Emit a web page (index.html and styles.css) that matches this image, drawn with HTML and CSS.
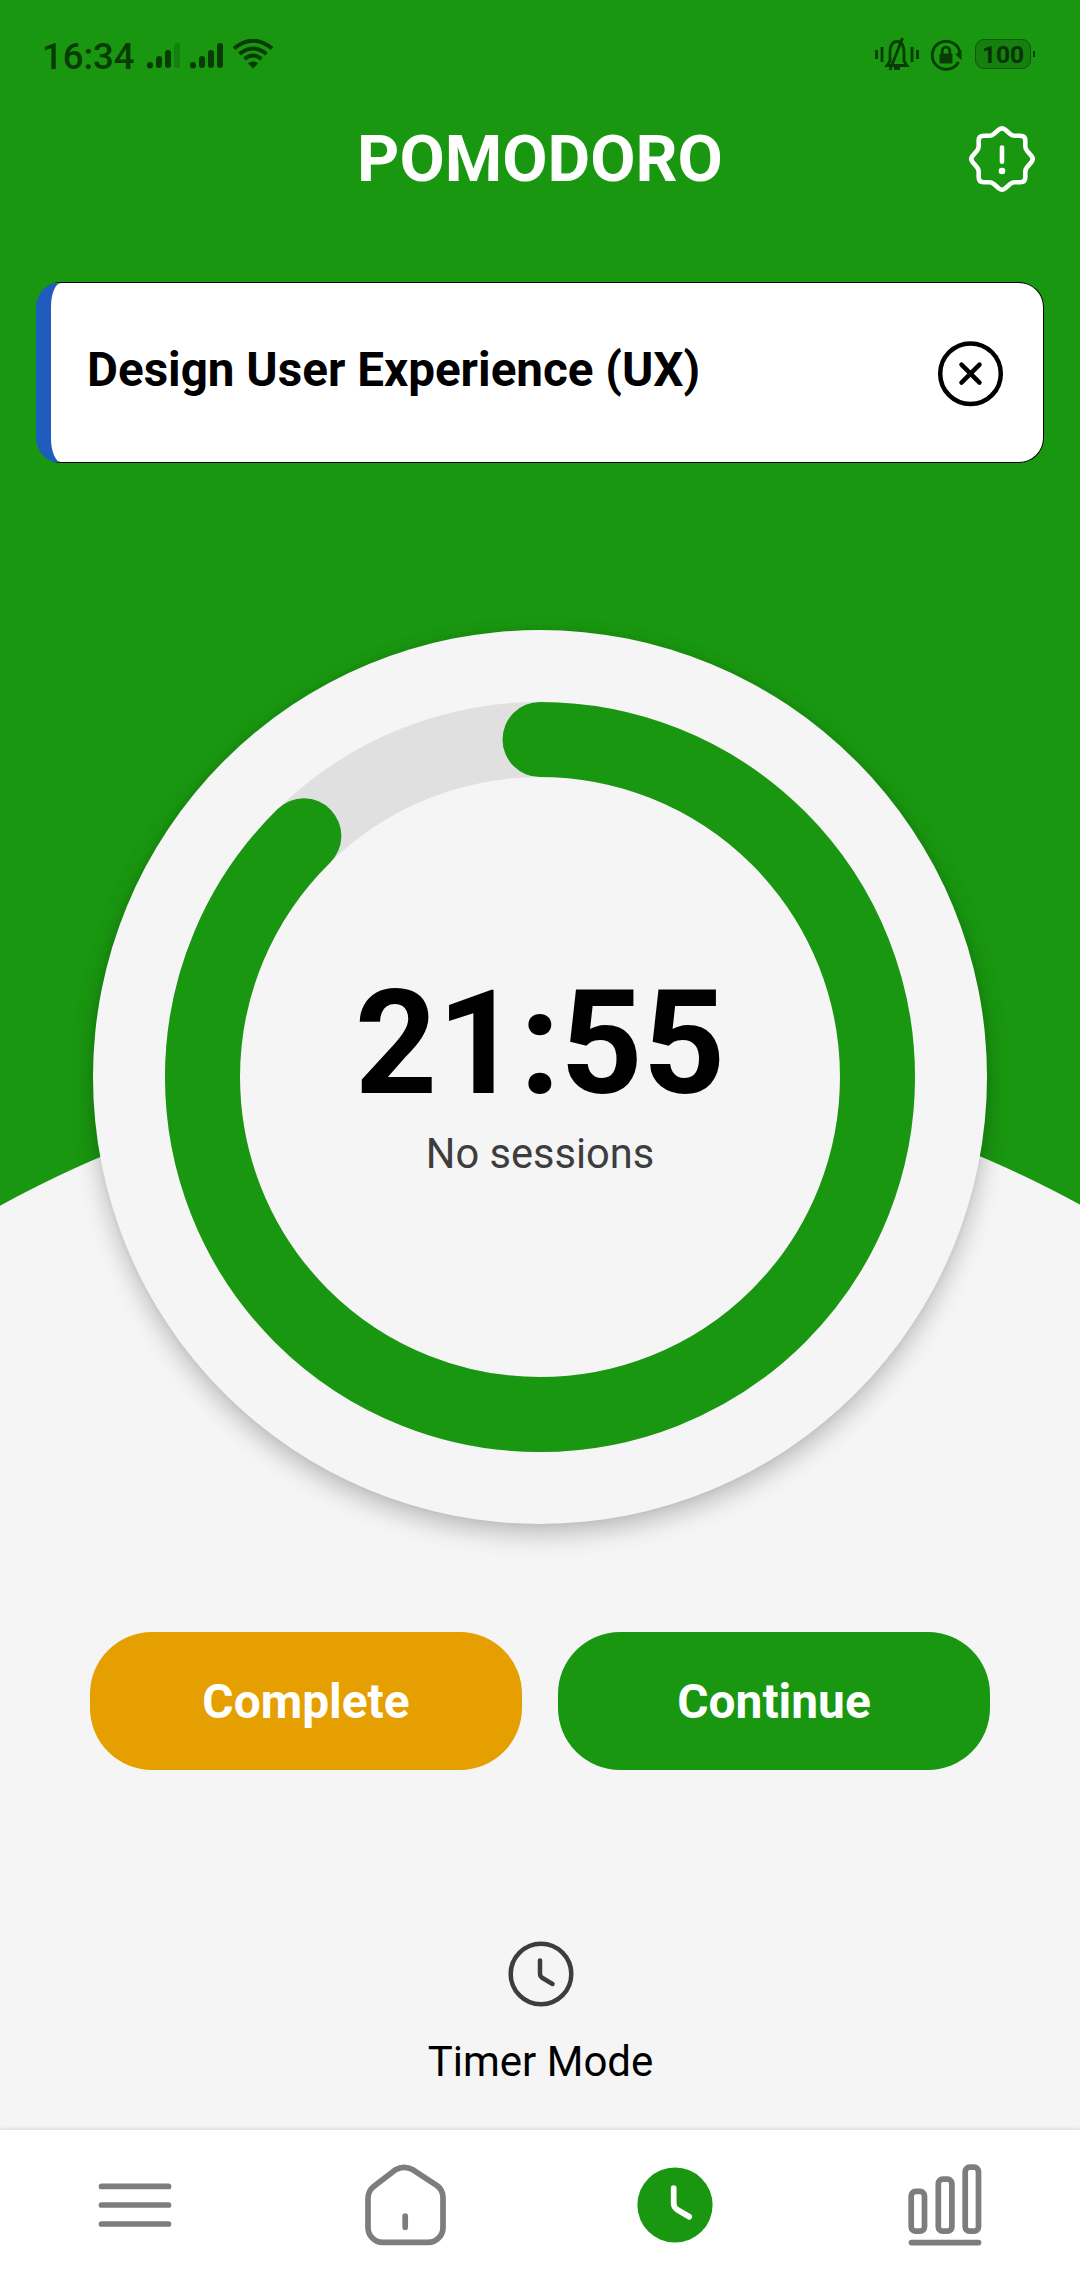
FILE: index.html
```html
<!DOCTYPE html>
<html lang="en">
<head>
<meta charset="utf-8">
<title>Pomodoro</title>
<link rel="stylesheet" href="styles.css">
</head>
<body>
<div class="app">
  <div class="status">
    <span class="status-time">16:34</span>
    <svg class="signal" width="30" height="30" viewBox="0 0 30 30">
      <path d="M3 24.5V24M12 24V18M21 24V12"/><path class="faint" d="M30 24V5"/>
    </svg>
    <svg class="signal signal-second" width="34" height="30" viewBox="0 0 34 30">
      <path d="M3 24.5V24M12 24V18M21 24V12M30 24V5"/>
    </svg>
    <svg class="wifi" width="42" height="30" viewBox="0 0 42 30">
      <path d="M2 9.5Q21-6 40 9.5M7.5 15Q21 4 34.5 15M12.5 20Q21 13 29.5 20"/>
      <path class="solid" d="M16 24.3Q21 20.8 26 24.3L21 29.5Z"/>
    </svg>
    <div class="status-right">
      <svg class="bell" width="46" height="36" viewBox="0 0 46 36">
        <path d="M2.500 13V22M8 10V25M38 10V25M43.500 13V22"/>
        <path d="M13 28.500L16 24V15C16 8 19 4.500 23 4.500S30 8 30 15V24L33 28.500ZM28.500 1L16 33M20 31.500H26"/>
      </svg>
      <svg class="lock" width="34" height="34" viewBox="0 0 34 34">
        <path d="M29.500 24A14 14 0 1 1 31 15"/>
        <path class="solid" d="M26.500 16.500L32.500 12V22Z"/>
        <rect class="solid" x="10.500" y="15.500" width="13" height="10" rx="1.500"/>
        <path d="M13.200 16V13A3.800 3.800 0 0 1 20.800 13V16"/>
      </svg>
      <span class="battery">100</span>
    </div>
  </div>

  <header class="header">
    <h1 class="title">POMODORO</h1>
    <svg class="notice" width="72" height="72" viewBox="-36 -36 72 72">
      <path d="M-3-29.500Q0-31.800 3-29.500L8.200-25Q10.300-23.300 13-23.300H18.300Q23.300-23.300 23.300-18.300V-13Q23.300-10.300 25-8.200L29.500-3Q31.800 0 29.500 3L25 8.200Q23.300 10.300 23.300 13V18.300Q23.300 23.300 18.300 23.300H13Q10.300 23.300 8.200 25L3 29.500Q0 31.800-3 29.500L-8.200 25Q-10.300 23.300-13 23.300H-18.300Q-23.300 23.300-23.300 18.300V13Q-23.300 10.300-25 8.200L-29.500 3Q-31.800 0-29.500-3L-25-8.200Q-23.300-10.300-23.300-13V-18.300Q-23.300-23.300-18.300-23.300H-13Q-10.300-23.300-8.200-25ZM0-11.400V2.700"/>
      <circle cx="0" cy="12" r="3.300"/>
    </svg>
  </header>

  <section class="task">
    <span class="task-name">Design User Experience (UX)</span>
    <svg class="task-close" width="72" height="72" viewBox="0 0 72 72">
      <circle cx="36.500" cy="36.700" r="30.300"/>
      <path d="M27.500 27.700L45.500 45.700M45.500 27.700L27.500 45.700"/>
    </svg>
  </section>

  <main class="dial">
    <svg class="ring" width="750" height="750" viewBox="0 0 750 750">
      <circle class="ring-track" cx="375" cy="375" r="337.500"/>
      <circle class="ring-value" cx="375" cy="375" r="337.500" pathLength="1500" stroke-dasharray="1315 1500" transform="rotate(-90 375 375)"/>
    </svg>
    <div class="readout">
      <div class="clock">21:55</div>
      <div class="sessions">No sessions</div>
    </div>
  </main>

  <div class="actions">
    <button class="action complete">Complete</button>
    <button class="action continue">Continue</button>
  </div>

  <div class="mode">
    <svg class="mode-icon" width="72" height="72" viewBox="0 0 72 72">
      <circle cx="36" cy="36" r="30.300"/>
      <path d="M35 22.500V35.500Q35 38.600 37.500 40L47.500 46"/>
    </svg>
    <span class="mode-label">Timer Mode</span>
  </div>

  <nav class="nav">
    <svg class="nav-icon" width="90" height="90" viewBox="0 0 90 90">
      <path d="M11.500 26.400H78.500M11.500 45H78.500M11.500 64H78.500"/>
    </svg>
    <svg class="nav-icon" width="90" height="90" viewBox="0 0 90 90">
      <path d="M22.800 82.400H68A15 15 0 0 0 83 67.400V37.500Q83 30 77 25.600L53 9.800Q44 4.800 35.500 9.800L14 26.300Q8 31 8 38.500V67.400A15 15 0 0 0 22.800 82.400ZM45.200 56V67.200"/>
    </svg>
    <svg class="nav-icon active" width="90" height="90" viewBox="0 0 90 90">
      <circle cx="45" cy="45" r="37.600"/>
      <path d="M43.700 28V43Q43.700 47.500 47.300 49.700L59.200 56.800"/>
    </svg>
    <svg class="nav-icon" width="90" height="90" viewBox="0 0 90 90">
      <rect x="11.200" y="31.400" width="13.300" height="39.800" rx="4.500"/>
      <rect x="38.300" y="19.200" width="13.600" height="52" rx="4.500"/>
      <rect x="65.200" y="7.200" width="13.300" height="64" rx="4.500"/>
      <path d="M11.500 82.600H78.500"/>
    </svg>
  </nav>
</div>
</body>
</html>
```
FILE: styles.css
```css
* { box-sizing: border-box; }

body {
  margin: 0;
  font-family: Roboto, "Liberation Sans", sans-serif;
}

svg {
  display: block;
  flex: none;
  fill: none;
  stroke-linecap: round;
  stroke-linejoin: round;
}

.app {
  display: flex;
  flex-direction: column;
  width: 1080px;
  height: 2280px;
  overflow: hidden;
  background: radial-gradient(circle at 541px 2191px, #f5f5f5 1123.5px, #199710 1124.5px);
}

.status {
  display: flex;
  align-items: center;
  height: 112px;
  padding: 0 44px 0 42px;
  color: #073c04;
}

.status svg { stroke: #073c04; }
.status .solid { fill: #073c04; stroke: none; }

.status-time {
  width: 105px;
  padding-top: 2px;
  font-size: 36.5px;
  font-weight: 500;
  line-height: 1;
}

.signal { overflow: visible; stroke-width: 6; }
.signal .faint { opacity: .25; }
.signal-second { margin-left: 13px; }

.wifi {
  margin-left: 8px;
  margin-top: -5px;
  stroke-width: 4;
}

.wifi path { stroke-linecap: butt; }

.status-right {
  display: flex;
  align-items: center;
  margin-left: auto;
}

.bell { stroke-width: 2.800; margin-top: -3px; }
.bell path { stroke-linecap: butt; stroke-linejoin: miter; }
.lock { margin-left: 9px; margin-top: -2px; stroke-width: 2.800; }
.lock path { stroke-linecap: butt; }

.battery {
  position: relative;
  width: 56px;
  height: 30px;
  margin: -4px 5px 0 12px;
  border: 1.500px solid #0c5a08;
  border-radius: 9px;
  background: #15800d;
  color: #073204;
  font-size: 24.5px;
  font-weight: 700;
  line-height: 29px;
  text-align: center;
}

.battery::after {
  content: "";
  position: absolute;
  top: 11px;
  right: -5px;
  width: 2px;
  height: 6px;
  background: #073c04;
}

.header {
  display: grid;
  grid-template-columns: 72px 1fr 72px;
  align-items: center;
  height: 94px;
  padding: 0 42px;
}

.title {
  grid-column: 2;
  margin: 0;
  color: #fff;
  font-size: 65.7px;
  font-weight: 700;
  line-height: 1;
  text-align: center;
}

.notice { stroke: #fff; stroke-width: 4.600; }
.notice circle { fill: #fff; stroke: none; }

.task {
  display: flex;
  align-items: center;
  justify-content: space-between;
  height: 181px;
  margin: 76px 36px 0;
  padding: 0 37px 0 36px;
  border: 1px solid #000;
  border-left: 15px solid #205cbd;
  border-radius: 25px;
  background: #fff;
}

.task-name {
  padding-bottom: 6px;
  color: #000;
  font-size: 47.6px;
  font-weight: 700;
}

.task-close { stroke: #000; stroke-width: 4.500; }

.dial {
  display: grid;
  place-items: center;
  flex: none;
  width: 894px;
  height: 894px;
  margin: 167px auto 0;
  border-radius: 50%;
  background: #f5f5f5;
  box-shadow: 0 10px 24px rgba(0, 0, 0, .24), 0 0 6px rgba(0, 0, 0, .06);
}

.ring, .readout { grid-area: 1 / 1; }
.ring-track { stroke: #e0e0e0; stroke-width: 75; }
.ring-value { stroke: #199710; stroke-width: 75; }

.readout { padding-top: 3px; text-align: center; }

.clock {
  color: #000;
  font-size: 143.8px;
  font-weight: 700;
  line-height: 150px;
}

.sessions {
  color: #3d3d3d;
  font-size: 41.6px;
  line-height: 69px;
}

.actions {
  display: grid;
  grid-template-columns: 1fr 1fr;
  gap: 36px;
  margin: 108px 90px 0;
}

.action {
  height: 138px;
  padding: 2px 0 0;
  border: 0;
  border-radius: 62px;
  color: #fff;
  font: 700 47.9px Roboto, "Liberation Sans", sans-serif;
}

.complete { background: #e69f00; }
.continue { background: #199710; }

.mode {
  display: flex;
  flex-direction: column;
  align-items: center;
  margin-top: 168px;
}

.mode-icon { margin-left: 2px; stroke: #3d3d3d; stroke-width: 4.500; }

.mode-label {
  margin-top: 27px;
  margin-left: 1px;
  color: #000;
  font-size: 42px;
  line-height: 50px;
}

.nav {
  display: grid;
  grid-template-columns: repeat(4, 1fr);
  place-items: center;
  height: 150px;
  margin-top: auto;
  background: #fff;
  box-shadow: 0 -1px 4px rgba(0, 0, 0, .12);
}

.nav-icon { stroke: #7d7d7d; stroke-width: 5.700; }
.active { stroke: #fff; }
.active circle { fill: #199710; stroke: none; }
```
